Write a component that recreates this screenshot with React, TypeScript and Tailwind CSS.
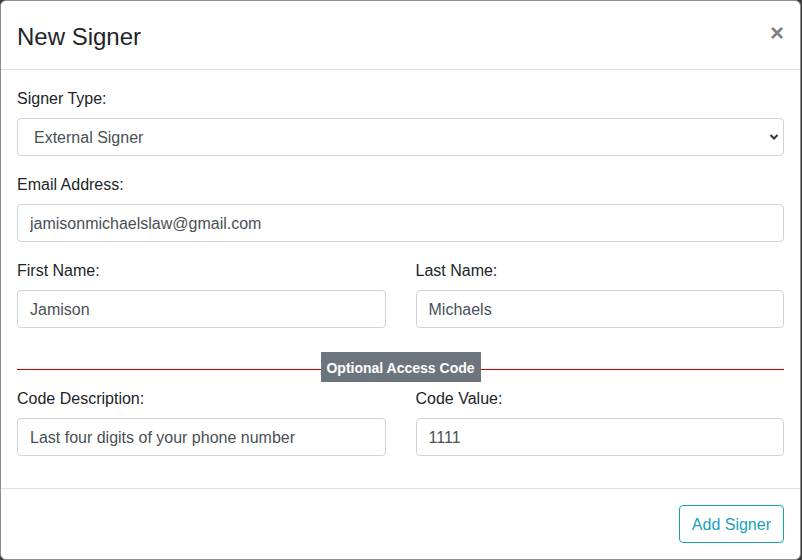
import React from "react";

const font = { fontFamily: '"Segoe UI", "Liberation Sans", Arial, sans-serif' };

function Field({ label, value }: { label: string; value: string }) {
  return (
    <div className="mb-4 flex flex-col">
      <label className="mb-2 pt-[2px] text-base leading-[22px] text-[#212529]">{label}</label>
      <input
        readOnly
        value={value}
        className="h-[38px] w-full rounded border border-[#ced4da] bg-white px-3 pt-[2px] text-base text-[#495057] outline-none"
      />
    </div>
  );
}

export default function App() {
  return (
    <div className="h-[560px] w-[802px] bg-[#3a3a3a]" style={font}>
      <div className="flex h-[560px] w-[801px] flex-col rounded-md border border-[#8c8c8c] bg-white">
        <div className="flex h-[69px] shrink-0 items-start justify-between border-b border-[#dee2e6] px-4 pt-[18px]">
          <h4 className="text-2xl font-medium leading-9 text-[#212529]">New Signer</h4>
          <button className="mt-[2px] text-2xl font-bold leading-6 text-black opacity-50">×</button>
        </div>

        <div className="flex-1 px-4 pt-4">
          <div className="mb-4 flex flex-col">
            <label className="mb-2 pt-[2px] text-base leading-[22px] text-[#212529]">Signer Type:</label>
            <div className="relative">
              <select
                defaultValue="external"
                className="h-[38px] w-full appearance-none rounded border border-[#ced4da] bg-white pl-4 pr-8 pt-[2px] text-base text-[#495057] outline-none"
              >
                <option value="external">External Signer</option>
                <option value="internal">Internal Signer</option>
              </select>
              <svg
                className="pointer-events-none absolute right-[5px] top-[15px]"
                width="10"
                height="8"
                viewBox="0 0 10 8"
              >
                <path d="M1.5 2 L5 5.5 L8.5 2" fill="none" stroke="#333" strokeWidth="2" />
              </svg>
            </div>
          </div>

          <Field label="Email Address:" value="jamisonmichaelslaw@gmail.com" />

          <div className="grid grid-cols-2 gap-x-[30px]">
            <Field label="First Name:" value="Jamison" />
            <Field label="Last Name:" value="Michaels" />
          </div>

          <div className="mb-1 mt-2 flex items-start">
            <div className="mt-[17px] h-px flex-1 bg-[#cc0000]" />
            <span className="flex h-[30px] w-[160px] items-center justify-center bg-[#6c757d] pt-[1px] text-sm font-bold text-white">
              Optional Access Code
            </span>
            <div className="mt-[17px] h-px flex-1 bg-[#cc0000]" />
          </div>

          <div className="grid grid-cols-2 gap-x-[30px]">
            <Field label="Code Description:" value="Last four digits of your phone number" />
            <Field label="Code Value:" value="1111" />
          </div>
        </div>

        <div className="flex justify-end border-t border-[#dee2e6] p-4">
          <button className="h-[38px] rounded border border-[#17a2b8] px-3 pt-[2px] text-base text-[#17a2b8]">
            Add Signer
          </button>
        </div>
      </div>
    </div>
  );
}
